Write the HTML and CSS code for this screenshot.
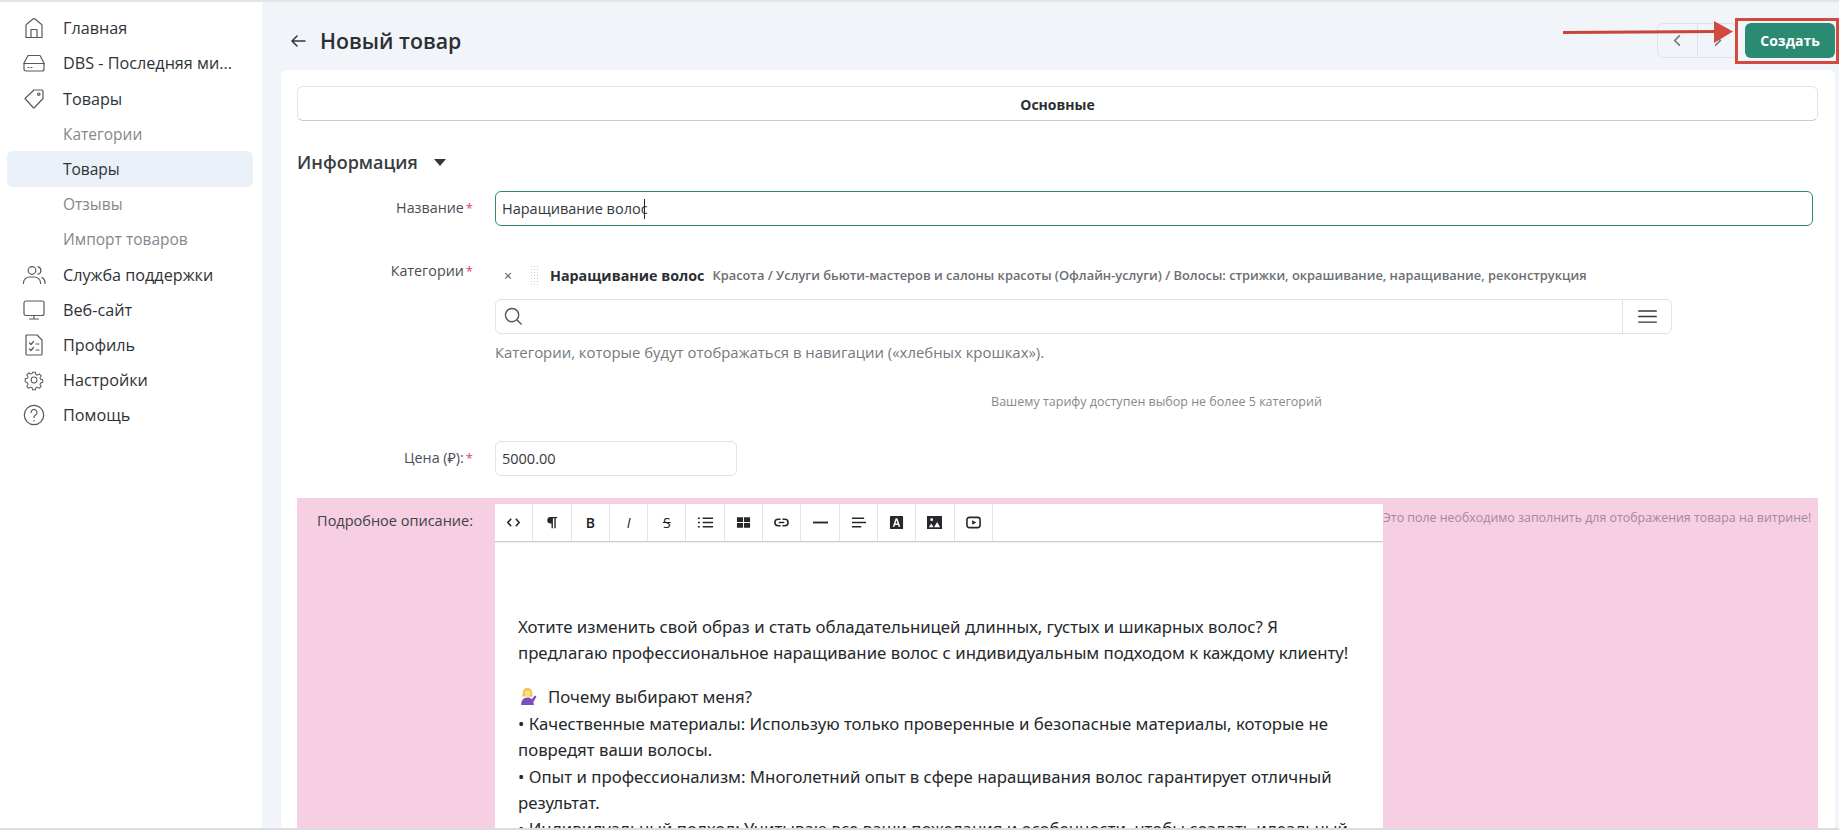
FILE: index.html
```html
<!DOCTYPE html>
<html lang="ru">
<head>
<meta charset="utf-8">
<title>Новый товар</title>
<link rel="stylesheet" href="styles.css">
</head>
<body>
<div class="app">
  <aside class="sidebar">
    <a class="nav-item"><svg class="nav-icon" viewBox="0 0 24 24"><path d="M4 21.500V9.500a1.500 1.500 0 0 1 .6-1.200L11 3a1.600 1.600 0 0 1 2 0l6.400 5.300a1.500 1.500 0 0 1 .6 1.200v12z"/><path d="M9 21.500V13.500h6v8"/></svg>Главная</a>
    <a class="nav-item"><svg class="nav-icon" viewBox="0 0 24 24"><path d="M6 4.500h12l4 7.500v6a2 2 0 0 1-2 2H4a2 2 0 0 1-2-2v-6z"/><path d="M2 12.500h20"/><path d="M6 16.500h1M9 16.500h1"/></svg>DBS - Последняя ми...</a>
    <a class="nav-item"><svg class="nav-icon" viewBox="0 0 24 24"><path d="M3 11.500L12 3h8a1 1 0 0 1 1 1v7.500L12.500 20.500a1 1 0 0 1-1.400 0z"/><circle cx="16.800" cy="7.200" r="1.200"/></svg>Товары</a>
    <a class="nav-item sub">Категории</a>
    <a class="nav-item sub current">Товары</a>
    <a class="nav-item sub">Отзывы</a>
    <a class="nav-item sub">Импорт товаров</a>
    <a class="nav-item"><svg class="nav-icon" viewBox="0 0 24 24"><circle cx="10" cy="7.500" r="3.800"/><path d="M1.500 20.500v-1a6 6 0 0 1 6-5.500h5a6 6 0 0 1 6 5.500v1"/><path d="M16 3.800a3.800 3.800 0 0 1 0 7.400"/><path d="M20 14.500a6 6 0 0 1 3 5v1"/></svg>Служба поддержки</a>
    <a class="nav-item"><svg class="nav-icon" viewBox="0 0 24 24"><rect x="2" y="3" width="20" height="14.500" rx="2"/><path d="M12 17.500v3.500M7.500 21h9"/></svg>Веб-сайт</a>
    <a class="nav-item"><svg class="nav-icon" viewBox="0 0 24 24"><path d="M4 3a1 1 0 0 1 1-1h10l5 5v14a1 1 0 0 1-1 1H5a1 1 0 0 1-1-1z"/><path d="M7.500 10l1.500 1.500 2.500-3M7.500 16l1.500 1.500 2.500-3M14 11h3M14 17h3"/></svg>Профиль</a>
    <a class="nav-item"><svg class="nav-icon" viewBox="0 0 24 24"><g transform="translate(12 12) scale(.85) translate(-12 -12)"><circle cx="12" cy="12" r="3.400"/><path d="M10.300 3h3.400l.5 2.600 1.700.7 2.200-1.500 2.400 2.400-1.500 2.200.7 1.700 2.600.5v3.400l-2.600.5-.7 1.700 1.500 2.200-2.400 2.400-2.200-1.500-1.700.7-.5 2.600h-3.400l-.5-2.600-1.700-.7-2.200 1.500-2.400-2.400 1.500-2.200-.7-1.700L1.700 13.700v-3.400l2.600-.5.700-1.700-1.500-2.200 2.400-2.400 2.200 1.500 1.700-.7z"/></g></svg>Настройки</a>
    <a class="nav-item"><svg class="nav-icon" viewBox="0 0 24 24"><circle cx="12" cy="12" r="9.700"/><path d="M9 9.500a3 3 0 1 1 4.500 2.600c-1 .6-1.500 1.200-1.500 2.400"/><path d="M12 17.500v.5"/></svg>Помощь</a>
  </aside>

  <main class="main">
    <header class="topbar">
      <svg class="back" viewBox="0 0 16 16"><path d="M15 8H2M7 3L2 8l5 5"/></svg>
      <h1 class="title">Новый товар</h1>
      <div class="pager">
        <button class="pager-btn"><svg viewBox="0 0 16 16"><path d="M10.500 2.500L5 8l5.500 5.500"/></svg></button>
        <button class="pager-btn"><svg viewBox="0 0 16 16"><path d="M5.500 2.500L11 8l-5.500 5.500"/></svg></button>
      </div>
      <button class="create">Создать</button>
    </header>

    <section class="card">
      <div class="tab">Основные</div>
      <h2 class="section-title">Информация <span class="caret"></span></h2>

      <div class="row row-name">
        <label class="label">Название<span class="req">*</span></label>
        <div class="field name-input">Наращивание волос<span class="cursor"></span></div>
      </div>

      <div class="row row-cat">
        <label class="label">Категории<span class="req">*</span></label>
        <div class="cat-body">
          <div class="cat-tag">
            <span class="cat-x">×</span>
            <span class="cat-grip"></span>
            <b class="cat-name">Наращивание волос</b>
            <span class="cat-path">Красота / Услуги бьюти-мастеров и салоны красоты (Офлайн-услуги) / Волосы: стрижки, окрашивание, наращивание, реконструкция</span>
          </div>
          <div class="search">
            <svg class="search-icon" viewBox="0 0 20 20"><circle cx="8.500" cy="8.500" r="7"/><path d="M13.500 13.500L18.500 18.500"/></svg>
            <div class="search-menu"><svg viewBox="0 0 20 14"><path d="M0 1h20M0 7h20M0 13h20"/></svg></div>
          </div>
          <p class="help">Категории, которые будут отображаться в навигации («хлебных крошках»).</p>
          <p class="limit">Вашему тарифу доступен выбор не более 5 категорий</p>
        </div>
      </div>

      <div class="row row-price">
        <label class="label">Цена (₽):<span class="req">*</span></label>
        <div class="field price-input">5000.00</div>
      </div>

      <div class="desc">
        <label class="desc-label">Подробное описание:</label>
        <div class="editor">
          <div class="toolbar">
            <span class="tool"><svg viewBox="0 0 16 16"><path class="ln" d="M5.500 4L2 8l3.500 4M10.500 4L14 8l-3.500 4"/></svg></span>
            <span class="tool"><svg viewBox="0 0 16 16"><path class="fl" d="M7 2h7v1.500h-1.500V14H11V3.500H9.500V14H8V9H7a3.500 3.500 0 0 1 0-7z"/></svg></span>
            <span class="tool tool-b">B</span>
            <span class="tool tool-i">I</span>
            <span class="tool tool-s">S</span>
            <span class="tool"><svg viewBox="0 0 16 16"><path class="ln" d="M5 3.500h11M5 8h11M5 12.500h11M0 3.500h2M0 8h2M0 12.500h2"/></svg></span>
            <span class="tool"><svg viewBox="0 0 16 16"><path class="fl" d="M1 2.500h6.500v5H1zM8.500 2.500H15v5H8.500zM1 8.500h6.500v5H1zM8.500 8.500H15v5H8.500z"/></svg></span>
            <span class="tool"><svg viewBox="0 0 16 16"><path class="ln" d="M7 4.500H4.500a3.500 3.500 0 0 0 0 7H7M9 4.500h2.500a3.500 3.500 0 0 1 0 7H9M5 8h6"/></svg></span>
            <span class="tool"><svg viewBox="0 0 16 16"><path class="ln thick" d="M0 8h16"/></svg></span>
            <span class="tool"><svg viewBox="0 0 16 16"><path class="ln" d="M1 3.500h13M1 8h15M1 12.500h10"/></svg></span>
            <span class="tool"><svg viewBox="0 0 16 16"><path class="fl" fill-rule="evenodd" d="M2 1h12a1 1 0 0 1 1 1v12a1 1 0 0 1-1 1H2a1 1 0 0 1-1-1V2a1 1 0 0 1 1-1zm6.900 2.500H7.100L4 12.500h1.800l.6-1.900h3.200l.6 1.900H12zM8 5.500l1.100 3.600H6.900z"/></svg></span>
            <span class="tool"><svg viewBox="0 0 16 16"><path class="fl" fill-rule="evenodd" d="M0 1h16v14H0zm5 2.500a1.500 1.500 0 1 0 0 3 1.500 1.500 0 0 0 0-3zM2 13h5l-2.500-4zm5.500 0H14l-3.200-5.500z"/></svg></span>
            <span class="tool"><svg viewBox="0 0 16 16"><rect class="ln" x="1" y="2.500" width="14" height="11" rx="2.500"/><path class="fl" d="M6.500 5.500L11 8l-4.500 2.500z"/></svg></span>
          </div>
          <div class="editor-body">
            <p>Хотите изменить свой образ и стать обладательницей длинных, густых и шикарных волос? Я предлагаю профессиональное наращивание волос с индивидуальным подходом к каждому клиенту!</p>
            <p><svg class="emoji" viewBox="0 0 18 18"><path fill="#f2c84b" d="M9 1c3 0 4.500 2 4.500 4.500 0 1.500.5 2.500 1 3.500H3.500c.5-1 1-2 1-3.500C4.500 3 6 1 9 1z"/><circle cx="9" cy="6" r="2.800" fill="#fbdc8e"/><path fill="#7b4fb5" d="M3 17c0-4 2-7 6-7 2 0 3 .5 4 1.500L16 8l1.500 1-3 5.500c.3.800.5 1.600.5 2.500z"/></svg>Почему выбирают меня?<br>
            • Качественные материалы: Использую только проверенные и безопасные материалы, которые не повредят ваши волосы.<br>
            • Опыт и профессионализм: Многолетний опыт в сфере наращивания волос гарантирует отличный результат.<br>
            • Индивидуальный подход: Учитываю все ваши пожелания и особенности, чтобы создать идеальный</p>
          </div>
        </div>
        <div class="desc-note">Это поле необходимо заполнить для отображения товара на витрине!</div>
      </div>
    </section>
  </main>

  <div class="mark-box"></div>
  <svg class="mark-arrow" viewBox="0 0 172 24"><path d="M0 12.500L154 11.500" stroke="#c9453b" stroke-width="3" fill="none"/><path d="M151 1L170 11.500 151 23z" fill="#d2493d"/></svg>
</div>
</body>
</html>
```
FILE: styles.css
```css
* { box-sizing: border-box; }
html, body { margin: 0; padding: 0; height: 830px; overflow: hidden; }
body { font-family: "Open Sans", "Noto Sans", sans-serif; color: #2b2f33; background: #fff; }
p, h1, h2 { margin: 0; }

.app {
  position: relative;
  display: flex;
  width: 1839px;
  height: 830px;
  overflow: hidden;
  border-top: 2px solid #e4e4e6;
  border-bottom: 2px solid #dcdcde;
}

/* sidebar */
.sidebar { flex: 0 0 262px; padding: 8.600px 9px 0 7px; background: #fff; }
.nav-item {
  display: flex;
  align-items: center;
  height: 35.2px;
  padding-left: 15px;
  font-size: 16.200px;
  color: #2e3236;
  white-space: nowrap;
}
.nav-icon {
  flex: 0 0 24px;
  width: 24px;
  height: 24px;
  margin-right: 17px;
  fill: none;
  stroke: #55595e;
  stroke-width: 1.200;
  stroke-linejoin: round;
  stroke-linecap: round;
}
.sub { padding-left: 56px; color: #84888c; font-size: 15.500px; }
.current { background: #e9f0f7; border-radius: 6px; color: #2e3236; }

/* main */
.main { flex: 1; min-width: 0; background: #f1f4f9; padding: 0 4px 0 19px; }
.topbar { display: flex; align-items: center; height: 68px; padding-top: 9px; }
.back { width: 16px; height: 16px; margin-left: 9px; margin-right: 14px; fill: none; stroke: #30343a; stroke-width: 1.500; stroke-linecap: round; stroke-linejoin: round; }
.title { flex: 1; font-size: 21.300px; font-weight: 600; color: #2b2f33; }
.pager { display: flex; height: 35px; margin-right: 8px; border: 1px solid #dfe3e9; border-radius: 6px; }
.pager-btn { display: flex; width: 39px; align-items: center; justify-content: center; padding: 0; background: transparent; border: 0; }
.pager-btn + .pager-btn { border-left: 1px solid #dfe3e9; }
.pager-btn svg { width: 15px; height: 15px; fill: none; stroke: #6f757c; stroke-width: 1.700; }
.create { width: 90px; height: 35px; background: #2a8a72; border: 0; border-radius: 6px; color: #fff; font: 700 14px "Open Sans", sans-serif; }

.card { height: 760px; padding: 16px 17px 0 16px; background: #fff; border-radius: 6px 6px 0 0; }
.tab { height: 35px; line-height: 35px; border: 1px solid #dfe3e8; border-bottom-color: #c6cbd1; border-radius: 6px; text-align: center; font-size: 14px; font-weight: 700; color: #2b2f33; }
.section-title { margin-top: 29px; font-size: 18px; font-weight: 600; line-height: 24px; color: #3a3d40; }
.caret { display: inline-block; margin-left: 11px; vertical-align: 3px; border: 6px solid transparent; border-top: 7px solid #33373b; border-bottom: 0; }

.row { display: flex; }
.label { flex: 0 0 198px; padding-right: 22px; text-align: right; font-size: 14.300px; color: #4a4e52; }
.req { color: #d04a62; margin-left: 2px; font-size: 13px; }
.field { border: 1px solid #dfe3e8; border-radius: 6px; font-size: 14.500px; color: #33373b; padding-left: 6px; }
.row-name { margin-top: 17px; }
.row-name .label { line-height: 33px; }
.name-input { width: 1318px; height: 35px; line-height: 33px; border-color: #2a8a72; }
.cursor { display: inline-block; width: 1px; height: 20px; margin-left: -4px; vertical-align: -5px; background: #222; }

.row-cat { margin-top: 29px; }
.row-cat .label { line-height: 20px; padding-top: 6px; }
.cat-body { flex: 1; min-width: 0; }
.cat-tag { display: flex; align-items: center; height: 30px; margin-top: 5px; white-space: nowrap; }
.cat-x { width: 13px; margin-left: 9px; font-size: 14px; color: #55595d; }
.cat-grip { width: 9px; height: 20px; margin: 0 11px 0 13px; background: radial-gradient(circle, #cfd2d5 .7px, transparent .8px) 0 0 / 3px 3px; }
.cat-name { font-size: 14.300px; font-weight: 700; color: #2b2f33; }
.cat-path { margin-left: 8px; font-size: 12.850px; font-weight: 600; color: #6b6f73; }
.search { position: relative; display: flex; align-items: center; width: 1177px; height: 35px; margin-top: 9px; border: 1px solid #dfe3e8; border-radius: 6px; }
.search-icon { width: 19px; height: 19px; margin-left: 8px; fill: none; stroke: #55595e; stroke-width: 1.500; }
.search-menu { display: flex; align-items: center; justify-content: center; width: 49px; height: 100%; margin-left: auto; border-left: 1px solid #dfe3e8; }
.search-menu svg { width: 19px; height: 13px; fill: none; stroke: #33373b; stroke-width: 1.500; }
.help { margin-top: 8px; font-size: 14.900px; line-height: 20px; color: #75797d; }
.limit { margin-top: 30px; font-size: 12.500px; line-height: 20px; text-align: center; width: 1318px; color: #85898d; padding-left: 5px; }

.row-price { margin-top: 29px; }
.row-price .label { line-height: 33px; }
.price-input { width: 242px; height: 35px; line-height: 33px; }

.desc { display: flex; align-items: flex-start; height: 340px; margin-top: 22px; background: #f6cfe2; padding-top: 6px; }
.desc-label { flex: 0 0 198px; padding: 7px 22px 0 0; font-size: 14.500px; line-height: 20px; color: #3f4246; white-space: nowrap; text-align: right; }
.editor { flex: 0 0 888px; height: 340px; background: #fff; }
.toolbar { display: flex; height: 38px; background: #fff; border-bottom: 1px solid #cfcfcf; box-shadow: 0 1px 1px rgba(0,0,0,.06); }
.tool { display: flex; flex: 0 0 38.300px; align-items: center; justify-content: center; border-right: 1px solid #e4e4e4; font-size: 14px; color: #222; }
.tool svg { width: 15px; height: 15px; }
.tool-b { font-weight: 600; }
.tool-i { font-style: italic; }
.tool-s { text-decoration: line-through; }
.ln { fill: none; stroke: #26282b; stroke-width: 1.700; }
.thick { stroke-width: 2; }
.fl { fill: #26282b; }
.editor-body { padding: 72px 30px 0 23px; font-family: "Noto Sans", sans-serif; font-size: 16.800px; line-height: 26.400px; color: #26292c; }
.editor-body p { margin-bottom: 17.600px; }
.emoji { width: 19px; height: 19px; margin-right: 11px; vertical-align: -3px; }
.desc-note { flex: 1; padding-top: 4px; font-size: 12.400px; line-height: 20px; white-space: nowrap; color: #a28a9a; }

/* annotation drawn over the page */
.mark-box { position: absolute; left: 1735px; top: 16px; width: 104px; height: 46px; border: 3px solid #d2493d; }
.mark-arrow { position: absolute; left: 1563px; top: 18px; width: 172px; height: 24px; }
```
